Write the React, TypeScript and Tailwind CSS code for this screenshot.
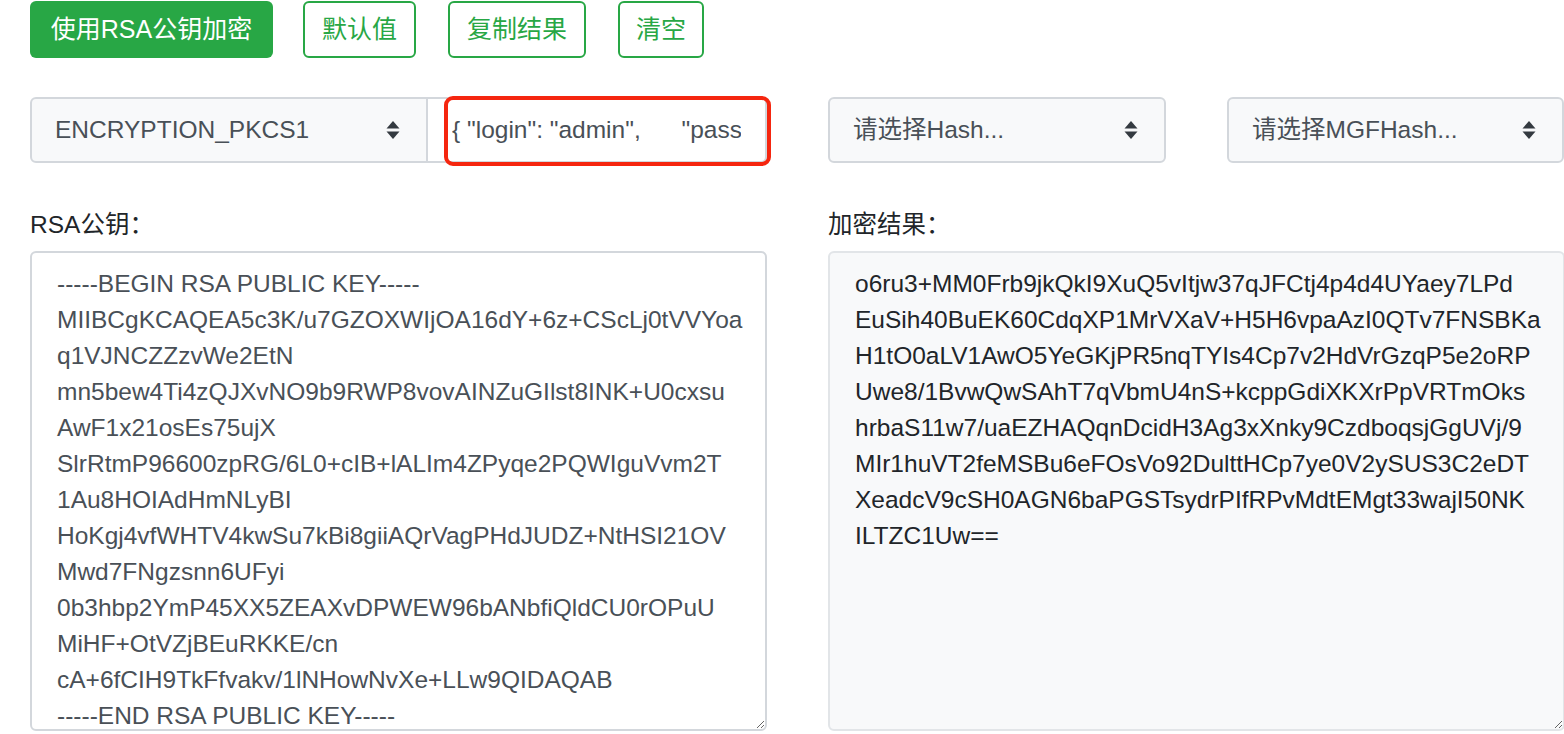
import React from 'react';

const publicKey = `-----BEGIN RSA PUBLIC KEY-----
MIIBCgKCAQEA5c3K/u7GZOXWIjOA16dY+6z+CScLj0tVVYoa
q1VJNCZZzvWe2EtN
mn5bew4Ti4zQJXvNO9b9RWP8vovAINZuGIlst8INK+U0cxsu
AwF1x21osEs75ujX
SlrRtmP96600zpRG/6L0+cIB+lALIm4ZPyqe2PQWIguVvm2T
1Au8HOIAdHmNLyBI
HoKgj4vfWHTV4kwSu7kBi8giiAQrVagPHdJUDZ+NtHSI21OV
Mwd7FNgzsnn6UFyi
0b3hbp2YmP45XX5ZEAXvDPWEW96bANbfiQldCU0rOPuU
MiHF+OtVZjBEuRKKE/cn
cA+6fCIH9TkFfvakv/1lNHowNvXe+LLw9QIDAQAB
-----END RSA PUBLIC KEY-----`;

const cipherText = `o6ru3+MM0Frb9jkQkI9XuQ5vItjw37qJFCtj4p4d4UYaey7LPd
EuSih40BuEK60CdqXP1MrVXaV+H5H6vpaAzI0QTv7FNSBKa
H1tO0aLV1AwO5YeGKjPR5nqTYIs4Cp7v2HdVrGzqP5e2oRP
Uwe8/1BvwQwSAhT7qVbmU4nS+kcppGdiXKXrPpVRTmOks
hrbaS11w7/uaEZHAQqnDcidH3Ag3xXnky9CzdboqsjGgUVj/9
MIr1huVT2feMSBu6eFOsVo92DulttHCp7ye0V2ySUS3C2eDT
XeadcV9cSH0AGN6baPGSTsydrPIfRPvMdtEMgt33wajI50NK
ILTZC1Uw==`;

const font = "font-['Liberation_Sans','Noto_Sans_CJK_SC',sans-serif]";

const SortArrows = () => (
    <svg viewBox="0 0 14 20" className="w-[14px] h-[20px] pointer-events-none">
        <path d="M7 1 L13.5 8.5 L0.5 8.5 Z" fill="#343a40" />
        <path d="M7 19 L13.5 11.5 L0.5 11.5 Z" fill="#343a40" />
    </svg>
);

interface SelectBoxProps {
    placeholder: string;
    width: string;
    rounded: string;
}

const SelectBox: React.FC<SelectBoxProps> = ({ placeholder, width, rounded }) => (
    <div className={`relative h-[66px] shrink-0 ${width}`}>
        <select
            defaultValue=""
            className={`appearance-none w-full h-full bg-[#f8f9fa] border-2 border-[#d3d7dc] ${rounded} text-[#495057] text-[24.5px] leading-[36px] pl-[23px] pr-[60px] outline-none ${font}`}
        >
            <option value="">{placeholder}</option>
        </select>
        <div className="absolute right-[28px] top-1/2 -translate-y-1/2 flex">
            <SortArrows />
        </div>
    </div>
);

const OutlineButton: React.FC<{ label: string; width: string }> = ({ label, width }) => (
    <button
        className={`${width} h-[57px] flex items-center justify-center rounded-[6px] border-2 border-[#28a745] bg-white text-[#28a745] text-[25px] leading-none`}
    >
        {label}
    </button>
);

const App: React.FC = () => {
    return (
        <div className={`min-h-[734px] bg-white pl-[30px] ${font} overflow-hidden`}>
            {/* action buttons */}
            <div className="flex items-center gap-[30px] pt-px">
                <button className="w-[243px] h-[57px] flex items-center justify-center rounded-[6px] bg-[#28a745] text-white text-[25px] leading-none">
                    使用RSA公钥加密
                </button>
                <div className="flex gap-[32px]">
                    <OutlineButton label="默认值" width="w-[113px]" />
                    <OutlineButton label="复制结果" width="w-[138px]" />
                    <OutlineButton label="清空" width="w-[86px]" />
                </div>
            </div>

            {/* options row */}
            <div className="grid grid-cols-[737px_737px] gap-x-[61px] mt-[39px]">
                <div className="flex h-[66px]">
                    <SelectBox placeholder="ENCRYPTION_PKCS1" width="w-[398px]" rounded="rounded-l-[6px]" />
                    <div className="relative flex-1 -ml-[2px]">
                        <input
                            readOnly
                            value={'{ "login": "admin",      "password": "123456" }'}
                            className={`w-full h-full bg-white border-2 border-[#d3d7dc] rounded-r-[6px] pl-[24px] pr-[24px] text-[24.5px] text-[#495057] outline-none ${font}`}
                        />
                        <div className="absolute left-[18px] -right-[4px] -top-[1px] -bottom-[3px] border-[4px] border-[#f5260f] rounded-[9px] pointer-events-none" />
                    </div>
                </div>
                <div className="flex gap-[61px]">
                    <SelectBox placeholder="请选择Hash..." width="w-[338px]" rounded="rounded-[6px]" />
                    <SelectBox placeholder="请选择MGFHash..." width="w-[337px]" rounded="rounded-[6px]" />
                </div>
            </div>

            {/* key / result */}
            <div className="grid grid-cols-[737px_737px] gap-x-[61px] mt-[44px]">
                <div className="flex flex-col">
                    <label className="text-[24.5px] leading-[36px] text-[#212529] mb-[8px]">RSA公钥：</label>
                    <textarea
                        readOnly
                        wrap="off"
                        value={publicKey}
                        className={`h-[480px] bg-white border-2 border-[#d3d7dc] rounded-[6px] pl-[25px] pr-[2px] pt-[13px] text-[24.5px] leading-[36px] text-[#495057] overflow-hidden outline-none resize-y ${font}`}
                    />
                </div>
                <div className="flex flex-col">
                    <label className="text-[24.5px] leading-[36px] text-[#212529] mb-[8px]">加密结果：</label>
                    <textarea
                        readOnly
                        wrap="off"
                        value={cipherText}
                        className={`h-[480px] bg-[#f8f9fa] border-2 border-[#e2e5e8] rounded-[6px] pl-[25px] pr-[2px] pt-[13px] text-[24.5px] leading-[36px] text-[#212529] overflow-hidden outline-none resize-y ${font}`}
                    />
                </div>
            </div>
        </div>
    );
};

export default App;
